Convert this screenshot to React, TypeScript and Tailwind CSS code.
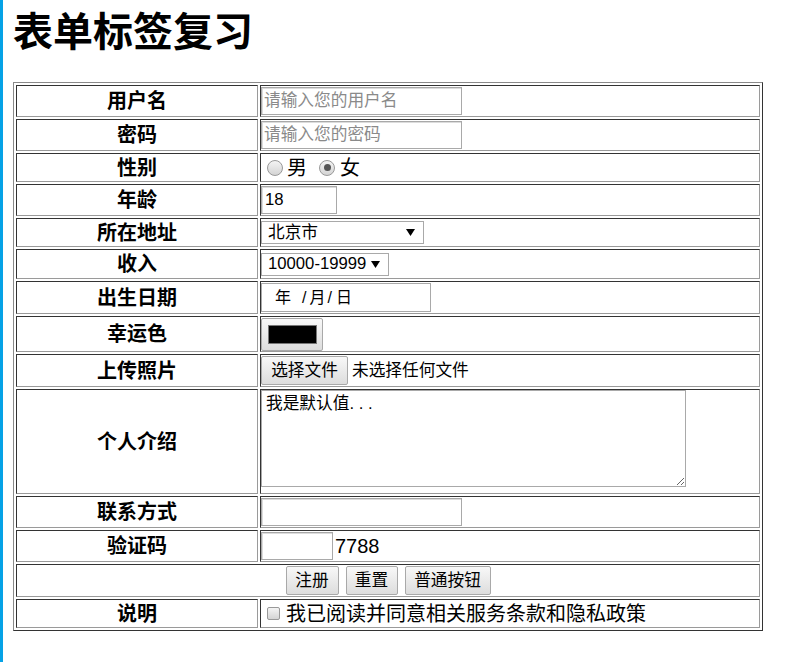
import React from "react";

const cell =
  "border border-t-[#333333] border-l-[#333333] border-r-[#9a9a9a] border-b-[#9a9a9a] min-w-0";
const labelCell =
  "flex items-center justify-center font-bold text-[20px] border border-t-[#333333] border-l-[#333333] border-r-[#9a9a9a] border-b-[#9a9a9a]";
const valueCell =
  "flex items-center text-[20px] border border-t-[#333333] border-l-[#333333] border-r-[#9a9a9a] border-b-[#9a9a9a] min-w-0";
const textInput =
  "h-[28px] border border-[#a9a9a9] shadow-[inset_1px_1px_0_#dcdcdc] bg-white px-[2px] text-[16.7px] outline-none placeholder:text-[#8a8a8a]";
const btn =
  "h-[29px] flex items-center justify-center rounded-[2px] border border-[#a9a9a9] bg-gradient-to-b from-[#f8f8f8] to-[#dddddd] text-[16.7px] text-black";

function Radio({ checked }: { checked?: boolean }) {
  return (
    <span className="relative inline-flex h-[16px] w-[16px] items-center justify-center rounded-full border border-[#999999] bg-gradient-to-b from-[#f4f4f4] to-[#d4d4d4]">
      {checked && <span className="h-[7px] w-[7px] rounded-full bg-[#555555]" />}
    </span>
  );
}

function Arrow() {
  return (
    <svg width="9" height="7" viewBox="0 0 9 7" className="shrink-0">
      <path d="M0 0 H9 L4.5 7 Z" fill="#000" />
    </svg>
  );
}

export default function App() {
  return (
    <div className="min-h-screen bg-white border-l-[3px] border-[#05a2e6] pl-[10px] text-black font-['Liberation_Sans','Noto_Sans_CJK_SC',sans-serif]">
      <h1 className="m-0 pt-[10px] mb-[28px] text-[40px] leading-[44px] font-bold">表单标签复习</h1>

      <div className="w-[750px] border border-t-[#8a8a8a] border-l-[#8a8a8a] border-r-[#333333] border-b-[#333333] p-[2px] grid grid-cols-[242px_1fr] grid-rows-[32px_32px_29px_32px_29px_30px_33px_36px_33px_105px_32px_32px_33px_29px] gap-[2px]">
        {/* 用户名 */}
        <div className={labelCell}>用户名</div>
        <div className={valueCell}>
          <input className={textInput + " w-[201px]"} placeholder="请输入您的用户名" />
        </div>

        {/* 密码 */}
        <div className={labelCell}>密码</div>
        <div className={valueCell}>
          <input className={textInput + " w-[201px]"} placeholder="请输入您的密码" />
        </div>

        {/* 性别 */}
        <div className={labelCell}>性别</div>
        <div className={valueCell}>
          <span className="ml-[6px] flex"><Radio /></span>
          <span className="ml-[4px] leading-none">男</span>
          <span className="ml-[12px] flex"><Radio checked /></span>
          <span className="ml-[5px] leading-none">女</span>
        </div>

        {/* 年龄 */}
        <div className={labelCell}>年龄</div>
        <div className={valueCell}>
          <input className={textInput + " w-[76px] pl-[3px]"} defaultValue="18" />
        </div>

        {/* 所在地址 */}
        <div className={labelCell}>所在地址</div>
        <div className={valueCell}>
          <div className="h-[23px] w-[163px] border border-[#a9a9a9] bg-white flex items-center justify-between pl-[6px] pr-[8px] text-[16.7px]">
            <span className="leading-none pt-[2px]">北京市</span>
            <Arrow />
          </div>
        </div>

        {/* 收入 */}
        <div className={labelCell}>收入</div>
        <div className={valueCell}>
          <div className="h-[23px] w-[128px] border border-[#a9a9a9] bg-white flex items-center justify-between pl-[6px] pr-[8px] text-[16.7px]">
            <span className="leading-none">10000-19999</span>
            <Arrow />
          </div>
        </div>

        {/* 出生日期 */}
        <div className={labelCell}>出生日期</div>
        <div className={valueCell}>
          <div className="h-[29px] w-[170px] border border-[#a9a9a9] bg-white flex items-center text-[16px] leading-none">
            <span className="ml-[13px]">年</span>
            <span className="ml-[11px]">/</span>
            <span className="ml-[3px]">月</span>
            <span className="ml-[2px]">/</span>
            <span className="ml-[4px]">日</span>
          </div>
        </div>

        {/* 幸运色 */}
        <div className={labelCell}>幸运色</div>
        <div className={valueCell}>
          <div className="h-[33px] w-[62px] rounded-[2px] border border-[#a9a9a9] bg-gradient-to-b from-[#f8f8f8] to-[#dddddd] flex items-center justify-center">
            <div className="h-[19px] w-[49px] border border-[#777777] bg-black" />
          </div>
        </div>

        {/* 上传照片 */}
        <div className={labelCell}>上传照片</div>
        <div className={valueCell}>
          <div className={btn + " w-[87px]"}>选择文件</div>
          <span className="ml-[4px] text-[16.7px]">未选择任何文件</span>
        </div>

        {/* 个人介绍 */}
        <div className={labelCell}>个人介绍</div>
        <div className={cell + " flex items-start pt-0"}>
          <textarea
            className="h-[97px] w-[425px] resize border border-[#a9a9a9] bg-white px-[4px] pt-[2px] text-[16.7px] leading-[22px] outline-none"
            defaultValue={"我是默认值. . ."}
          />
        </div>

        {/* 联系方式 */}
        <div className={labelCell}>联系方式</div>
        <div className={valueCell + " items-end pb-[1px]"}>
          <input className={textInput + " w-[201px]"} />
        </div>

        {/* 验证码 */}
        <div className={labelCell}>验证码</div>
        <div className={valueCell}>
          <input className={textInput + " w-[72px]"} />
          <span className="ml-[2px] text-[20px] leading-none">7788</span>
        </div>

        {/* 按钮 */}
        <div className={"col-span-2 flex items-center justify-center gap-[7px] " + cell}>
          <div className={btn + " w-[53px]"}>注册</div>
          <div className={btn + " w-[52px]"}>重置</div>
          <div className={btn + " w-[86px]"}>普通按钮</div>
        </div>

        {/* 说明 */}
        <div className={labelCell}>说明</div>
        <div className={valueCell}>
          <span className="ml-[6px] inline-block h-[13px] w-[13px] rounded-[2px] border border-[#999999] bg-gradient-to-b from-[#f4f4f4] to-[#d4d4d4]" />
          <span className="ml-[6px] leading-none">我已阅读并同意相关服务条款和隐私政策</span>
        </div>
      </div>
    </div>
  );
}
